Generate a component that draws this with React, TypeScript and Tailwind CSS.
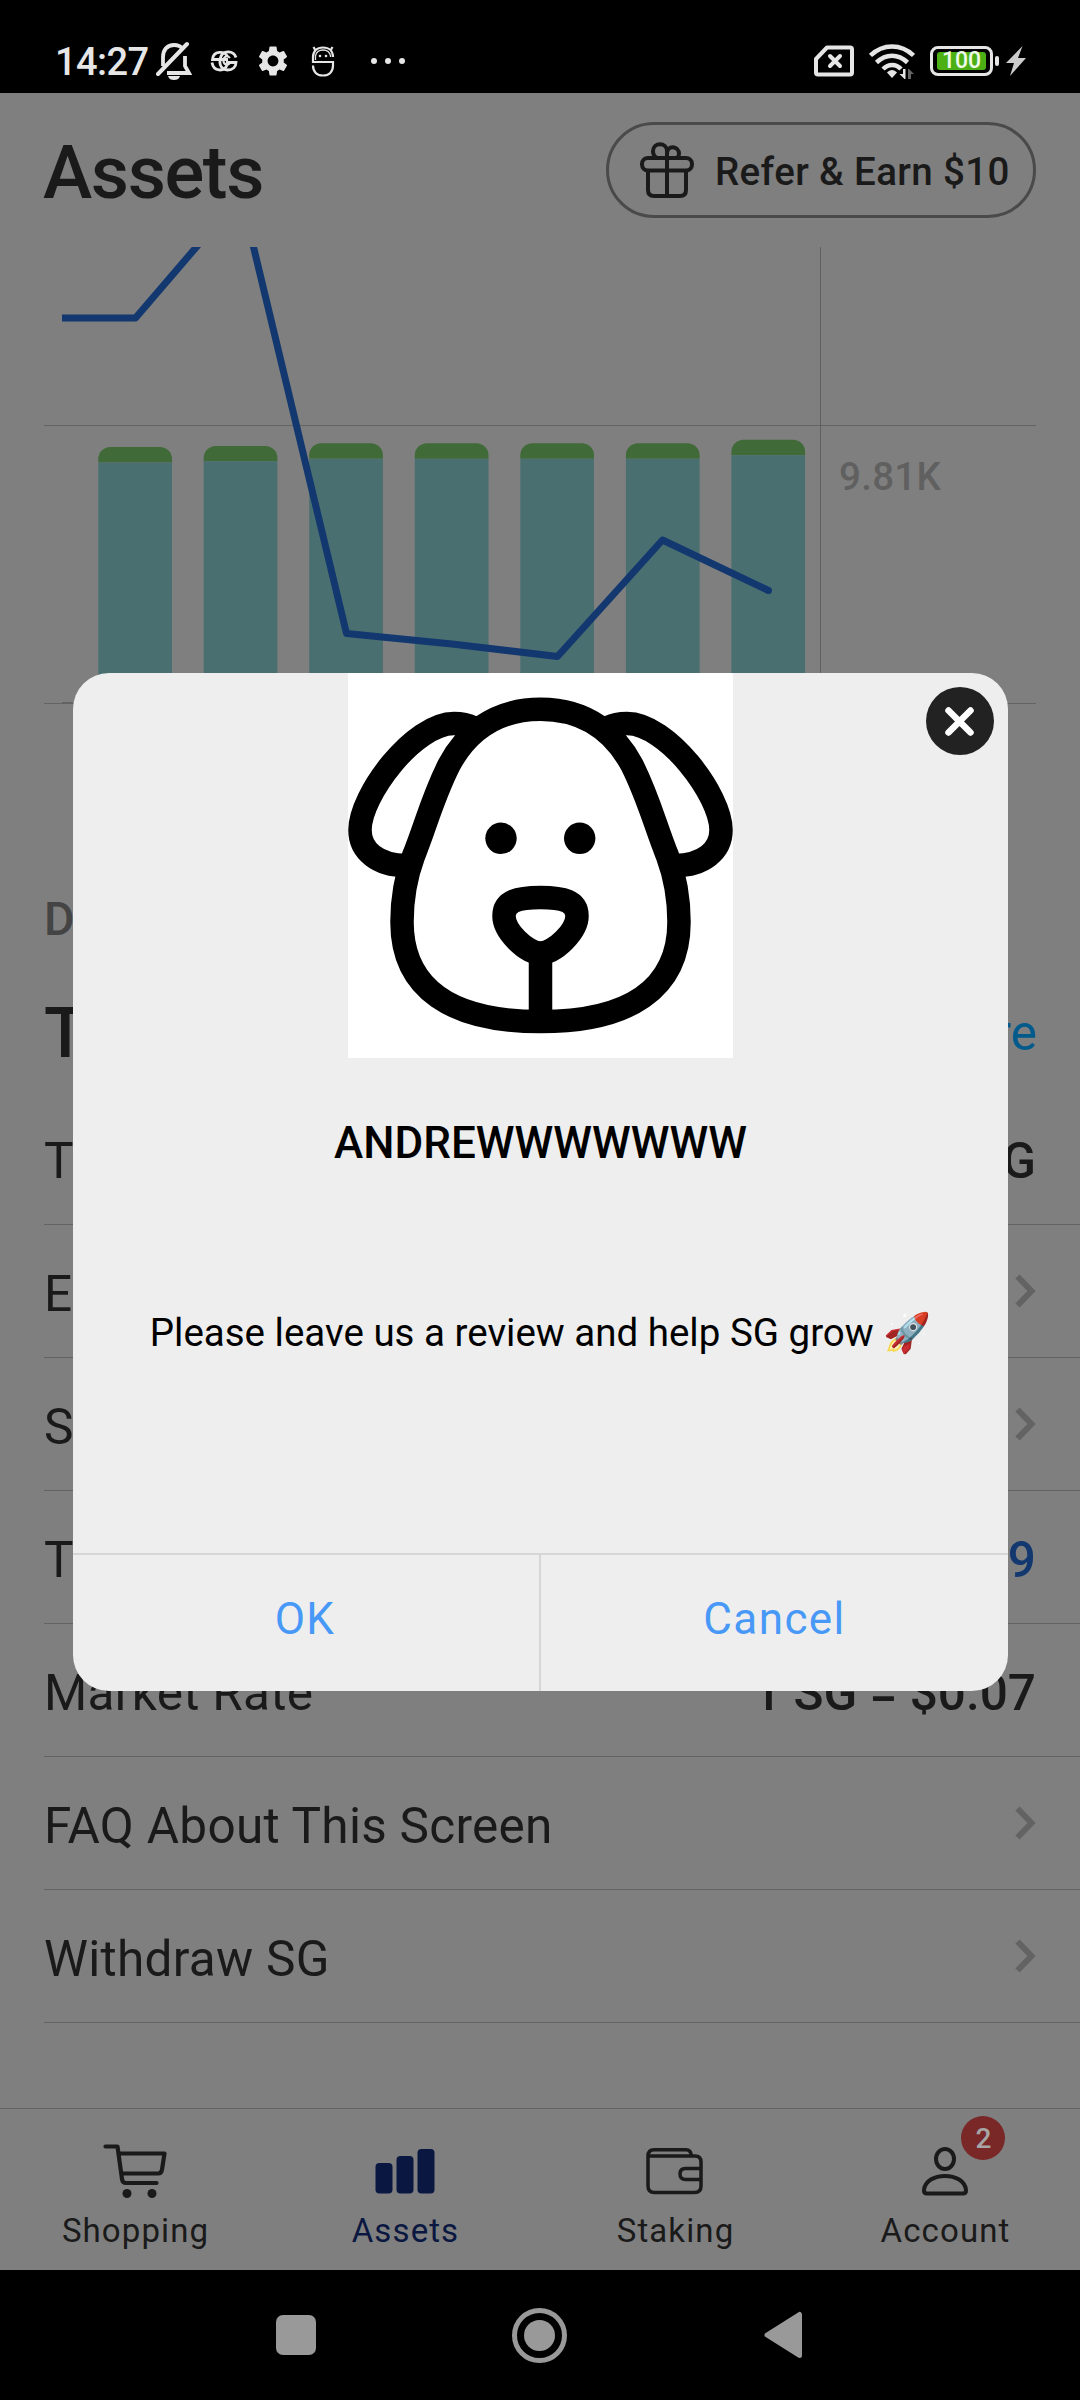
import React from 'react';

const bars = [
  { x: 98.3, top: 200, split: 215.6 },
  { x: 203.7, top: 199, split: 214.2 },
  { x: 309.2, top: 196.3, split: 211.8 },
  { x: 414.8, top: 196.3, split: 211.8 },
  { x: 520.3, top: 196.3, split: 211.8 },
  { x: 625.9, top: 196.3, split: 211.8 },
  { x: 731.4, top: 192.8, split: 208.2 },
];

function Chart() {
  return (
    <svg className="block h-[457px] w-full shrink-0" viewBox="0 0 1080 457">
      <rect x="44" y="178" width="992" height="1" fill="#636363" />
      <rect x="44" y="456" width="992" height="1" fill="#636363" />
      <rect x="62" y="455" width="758" height="1" fill="#636363" />
      <rect x="820" y="0" width="1" height="456" fill="#5f5f5f" />
      {bars.map((b) => (
        <g key={b.x}>
          <path
            d={`M${b.x} ${b.split}V${b.top + 12}a12 12 0 0 1 12 -12h49.7a12 12 0 0 1 12 12V${b.split}z`}
            fill="#406b39"
          />
          <rect x={b.x} y={b.split} width="73.7" height={455 - b.split} fill="#4a6f71" />
        </g>
      ))}
      <polyline
        points="62,71 135.5,71 241,-52 346.5,386.5 452,397 557.5,409.5 662.5,293 768.5,343.5"
        fill="none"
        stroke="#12386f"
        strokeWidth="7"
        strokeLinejoin="round"
      />
      <circle cx="768.5" cy="343.5" r="3.5" fill="#12386f" />
      <text x="839" y="243" fill="#606060" fontSize="38.5" fontWeight="500" letterSpacing="0.3">
        9.81K
      </text>
    </svg>
  );
}

function StatusBar() {
  return (
    <div className="flex h-[93px] shrink-0 items-center bg-black pl-[55px] pr-[54px] pt-[28px] text-[#e6e6e6]">
      <span className="w-[96px] whitespace-nowrap pt-[2px] text-[38px] font-medium leading-[44px] tracking-[-0.6px]">14:27</span>
      <svg className="ml-[5px] h-[40px] w-[36px]" viewBox="0 0 36 40" fill="none" stroke="#e6e6e6">
        <path d="M7 25V16C7 9 11 4 18 4c4 0 7 1.500 9 4M29 15v10l4 7H11" strokeWidth="3.800" />
        <path d="M2 33L31 3" strokeWidth="4" strokeLinecap="round" />
        <path d="M12 35h12c-1 3-3 4-6 4s-5-1-6-4z" fill="#e6e6e6" stroke="none" />
      </svg>
      <svg className="ml-[18px] h-[22px] w-[28px]" viewBox="0 0 28 22" fill="none" stroke="#e6e6e6" strokeWidth="2.800">
        <path d="M17.500 6.500C15 .5 3 .5 2.500 9.500H18M2 12.500C3.500 22 14.500 22 17 15" />
        <path d="M26 7.500C23.500 0 12.500 0 10.500 8C8.500 15 12 20 17.500 20C23 20 26 16.500 26 12.500H16" />
        <path d="M20 8c-2-2.500-6-2-6.500 2c-.5 5 4.500 6 6.500 3" strokeWidth="2" />
      </svg>
      <svg className="ml-[17px] h-[36px] w-[36px]" viewBox="0 0 24 24" fill="#e6e6e6">
        <path d="M19.140 12.940c.04-.3.060-.61.060-.94 0-.32-.02-.64-.07-.94l2.030-1.580c.18-.14.230-.41.120-.61l-1.920-3.320c-.12-.22-.37-.29-.59-.22l-2.390.96c-.5-.38-1.030-.7-1.620-.94l-.36-2.540c-.04-.24-.24-.41-.48-.41h-3.840c-.24 0-.43.17-.47.41l-.36 2.540c-.59.24-1.130.57-1.620.94l-2.390-.96c-.22-.08-.47 0-.59.22L2.740 8.870c-.12.21-.08.47.12.61l2.030 1.580c-.05.3-.09.63-.09.94s.02.640.07.940l-2.030 1.580c-.18.14-.23.41-.12.61l1.920 3.320c.12.220.37.290.59.220l2.390-.96c.5.380 1.030.700 1.620.940l.36 2.540c.05.240.24.410.48.410h3.840c.24 0 .44-.17.470-.41l.36-2.540c.59-.24 1.130-.56 1.620-.94l2.390.96c.22.080.47 0 .59-.22l1.920-3.320c.12-.22.070-.47-.12-.61l-2.010-1.580zM12 15.600c-1.980 0-3.600-1.620-3.600-3.600s1.620-3.600 3.600-3.600 3.600 1.620 3.600 3.600-1.620 3.600-3.600 3.600z" />
      </svg>
      <svg className="ml-[20px] h-[32px] w-[24px]" viewBox="0 0 24 32" fill="none" stroke="#e6e6e6" strokeWidth="2.200">
        <path d="M22 12C22 6 18 2.500 12 2.500S2 6 2 12V17H22V20.500C22 27 18 30.500 12 30.500S2 27 2 20.500M4.500 5.500L2.500 2M19.500 5.500l2-3.500" />
        <path d="M4.500 15V11C6 3 18 3 19.500 11V12" strokeWidth="1.300" />
        <circle cx="9" cy="11" r="1.300" fill="#e6e6e6" stroke="none" />
        <circle cx="15" cy="11" r="1.300" fill="#e6e6e6" stroke="none" />
      </svg>
      <div className="ml-[36px] flex gap-[8px]">
        <i className="size-[6px] rounded-full bg-[#e6e6e6]" />
        <i className="size-[6px] rounded-full bg-[#e6e6e6]" />
        <i className="size-[6px] rounded-full bg-[#e6e6e6]" />
      </div>
      <svg className="ml-auto h-[32px] w-[40px]" viewBox="0 0 40 32" fill="none" stroke="#e6e6e6" strokeWidth="4">
        <path d="M13 2.500h23q2 0 2 2v23q0 2-2 2H4q-2 0-2-2V14z" strokeLinejoin="round" />
        <path d="M16 11l10 10M26 11L16 21" strokeLinecap="round" />
      </svg>
      <svg className="ml-[15px] h-[36px] w-[46px]" viewBox="0 0 46 36" fill="none" stroke="#e6e6e6" strokeWidth="4.500">
        <path d="M1.500 12.500C14 .5 32 .5 44.500 12.500M7.500 19.500C17 10.500 29 10.500 38.500 19.500M14 26C19.500 20.500 27 20.500 32 26" />
        <path d="M18 29.500c3-3.500 7-3.500 10 0L23 35z" fill="#e6e6e6" stroke="none" />
        <path d="M36.500 26v10h-1l-5-5h3.500v-5z" fill="#e6e6e6" stroke="none" />
        <path d="M39 36V26h1l5 5h-3v5z" fill="#666" stroke="none" />
      </svg>
      <div className="ml-[15px] flex h-[30px] w-[63px] items-center justify-center rounded-[8px] border-[3px] border-[#e6e6e6]">
        <div className="flex h-[18px] w-[49px] items-center justify-center rounded-[3px] bg-[#4caf14] pt-px text-[23px] font-medium leading-[18px] text-[#eefbe8]">
          100
        </div>
      </div>
      <i className="ml-[2px] h-[10px] w-[4px] rounded-[2px] bg-[#e6e6e6]" />
      <svg className="ml-[7px] h-[30px] w-[20px]" viewBox="0 0 20 30" fill="#ccc">
        <path d="M16.500 0L0 17h8L4 30 20 12h-8z" />
      </svg>
    </div>
  );
}

function Header() {
  return (
    <div className="flex h-[154px] shrink-0 items-start justify-between pl-[43px] pr-[44px] pt-[29px]">
      <h1 className="mt-[3px] text-[74.250px] font-medium leading-[96px] tracking-[-1.400px]">Assets</h1>
      <div className="flex h-[96px] w-[430px] items-center rounded-full border-[3px] border-[#4a4a4a] pl-[31px]">
        <svg className="h-[56px] w-[54px]" viewBox="0 0 54 56" fill="none" stroke="#1a1a1a" strokeWidth="4">
          <rect x="2" y="16" width="50" height="12.500" rx="6" />
          <path d="M8 28.500V48q0 6 6 6h26q6 0 6-6V28.500M27 54V9" />
          <path d="M27 16V9c0-9-14-9-14 0q0 5 4 7M27 16v-4c0-10 12-8 12 0q0 2-2 4" />
        </svg>
        <span className="ml-[21px] whitespace-nowrap pt-[3px] text-[38.500px] font-medium leading-[44px] tracking-[0.380px]">
          Refer &amp; Earn $10
        </span>
      </div>
    </div>
  );
}

function Row({ label, value, blue, chevron }: { label: string; value?: string; blue?: boolean; chevron?: boolean }) {
  return (
    <div className="ml-[44px] flex h-[133px] shrink-0 items-center justify-between border-b border-[#636363] pr-[44px] text-[49.500px] leading-[58px]">
      <span className="pt-[5px] tracking-[0.280px]">{label}</span>
      {value && <span className={blue ? 'pt-[5px] font-medium text-[#12386f]' : 'pt-[5px] font-medium'}>{value}</span>}
      {chevron && (
        <svg className="h-[34px] w-[21px]" viewBox="0 0 21 34" fill="none" stroke="#636363" strokeWidth="6">
          <path d="M2.500 2.500L16.500 17 2.500 31.500" />
        </svg>
      )}
    </div>
  );
}

function Tab({ label, active, children }: { label: string; active?: boolean; children: React.ReactNode }) {
  return (
    <div className={active ? 'flex w-1/4 flex-col items-center text-[#0a1740]' : 'flex w-1/4 flex-col items-center'}>
      <div className="relative mt-[30px] flex h-[64px] w-[64px] justify-center">{children}</div>
      <span className="mt-[8px] pl-px text-[33px] leading-[40px] tracking-[1.100px]">{label}</span>
    </div>
  );
}

function TabBar() {
  return (
    <div className="flex h-[162px] shrink-0 border-t border-[#636363]">
      <Tab label="Shopping">
        <svg className="h-[64px] w-[64px]" viewBox="0 0 64 64" fill="none" stroke="#1a1a1a" strokeWidth="4.200" strokeLinecap="round" strokeLinejoin="round">
          <path d="M2.500 7.500h12l4.500 32.500q.5 4 4 4H53.500M15.500 14.500h46l-2.500 16q-.5 4-4 4H18.500" />
          <circle cx="24" cy="54.500" r="4.500" fill="#1a1a1a" stroke="none" />
          <circle cx="49" cy="54.500" r="4.500" fill="#1a1a1a" stroke="none" />
        </svg>
      </Tab>
      <Tab label="Assets" active>
        <svg className="h-[64px] w-[64px]" viewBox="0 0 64 64" fill="#0a1740">
          <rect x="2.500" y="24" width="17" height="30.500" rx="4" />
          <rect x="23.500" y="17" width="17" height="37.500" rx="4" />
          <rect x="44.500" y="10" width="17" height="44.500" rx="4" />
        </svg>
      </Tab>
      <Tab label="Staking">
        <svg className="h-[64px] w-[64px]" viewBox="0 0 64 64" fill="none" stroke="#1a1a1a" strokeWidth="3.500">
          <path d="M5 17V47q0 6.500 6.500 6.500h40q6.500 0 6.500-6.500V23q0-6-6-6H5q0-6.300 6-6.300h32q5 0 5.500 6.300" />
          <path d="M58 29.500H42.500q-5.500 0-5.500 5.500t5.500 5.500H58" />
        </svg>
      </Tab>
      <Tab label="Account">
        <svg className="h-[64px] w-[64px]" viewBox="0 0 64 64" fill="none" stroke="#1a1a1a" strokeWidth="4">
          <ellipse cx="32" cy="20" rx="9" ry="10" />
          <path d="M11 51.500C12 32 52 32 53 51.500q0 3-3 3H14q-3 0-3-3z" />
        </svg>
        <span className="absolute left-[48px] top-[-23px] flex size-[44px] items-center justify-center rounded-full bg-[#7a2727] pl-px pt-px text-[28px] font-medium text-[#a6a6a6]">
          2
        </span>
      </Tab>
    </div>
  );
}

function SystemNav() {
  return (
    <div className="flex h-[130px] shrink-0 items-center bg-black pl-[276px]">
      <i className="size-[40px] rounded-[7px] bg-[#999]" />
      <div className="ml-[196px] flex size-[55px] items-center justify-center rounded-full border-[5px] border-[#999]">
        <i className="size-[31px] rounded-full bg-[#999]" />
      </div>
      <svg className="ml-[197px] h-[48px] w-[38px]" viewBox="0 0 38 48" fill="#999" stroke="#999" strokeWidth="5" strokeLinejoin="round">
        <path d="M3 24L35.500 3.500v41z" />
      </svg>
    </div>
  );
}

function Dog() {
  return (
    <svg className="block h-[385px] w-[385px] bg-white" viewBox="0 0 385 385" fill="none" stroke="#000" strokeWidth="23.500">
      <path d="M192.500 36.300C143 36.300 116 64 101 92C84 126 78 152 65.500 183C57 206 54 226 54 249C54 316 104 348.600 192.500 348.600S331 316 331 249C331 226 328 206 319.500 183C307 152 301 126 284 92C269 64 242 36.300 192.500 36.300z" />
      <path d="M124 54C118 51 112 50.500 106 50.500C66 50.500 12 122 12 157C12 178 30 192.500 58 192.500" />
      <path d="M261 54C267 51 273 50.500 279 50.500C319 50.500 373 122 373 157C373 178 355 192.500 327 192.500" />
      <path d="M192.500 224.500C170 224.500 156 228 156 243C156 258 178 280 192.500 280S229 258 229 243C229 228 215 224.500 192.500 224.500z" />
      <path d="M192.500 280V348" />
      <circle cx="153" cy="165.300" r="15.700" fill="#000" stroke="none" />
      <circle cx="231.700" cy="165.300" r="15.700" fill="#000" stroke="none" />
    </svg>
  );
}

function Modal() {
  return (
    <div className="absolute left-[73px] top-[673px] flex h-[1018px] w-[935px] flex-col items-center overflow-hidden rounded-[36px] bg-[#eee] text-black">
      <Dog />
      <button className="absolute right-[14px] top-[14px] flex size-[68px] items-center justify-center rounded-full bg-[#222] pr-px pt-px">
        <svg className="h-[31px] w-[31px]" viewBox="0 0 31 31" stroke="#fff" strokeWidth="6.500" strokeLinecap="round">
          <path d="M4.500 4.500l22 22M26.500 4.500l-22 22" />
        </svg>
      </button>
      <h2 className="mt-[59px] text-[44px] font-medium leading-[52px]">ANDREWWWWWWW</h2>
      <p className="mt-[141px] whitespace-nowrap text-[38.500px] leading-[46px]">Please leave us a review and help SG grow 🚀</p>
      <div className="mt-auto flex h-[138px] w-full border-t-2 border-[#d6d6d6] text-[44px] leading-[52px] tracking-[1.400px] text-[#4899f7]">
        <button className="w-[468px] border-r-2 border-[#d6d6d6] pb-[8px] pr-[2px]">OK</button>
        <button className="w-[467px] pb-[8px]">Cancel</button>
      </div>
    </div>
  );
}

export default function App() {
  return (
    <div className="relative flex h-[2400px] w-[1080px] flex-col overflow-hidden bg-[#7f7f7f] font-['Roboto',sans-serif] text-[#1a1a1a]">
      <StatusBar />
      <Header />
      <Chart />
      <div className="flex h-[388px] shrink-0 flex-col px-[44px] pt-[187px]">
        <span className="text-[46.750px] font-medium leading-[56px] text-[#444]">D</span>
        <div className="mt-[44px] flex items-center justify-between leading-[84px]">
          <h2 className="text-[70px] font-medium">T</h2>
          <span className="-mr-px text-[49.500px] text-[#005a8c]">More</span>
        </div>
      </div>
      <Row label="T" value="SG" />
      <Row label="E" chevron />
      <Row label="S" chevron />
      <Row label="T" value="9" blue />
      <Row label="Market Rate" value="1 SG = $0.07" />
      <Row label="FAQ About This Screen" chevron />
      <Row label="Withdraw SG" chevron />
      <div className="flex-1" />
      <TabBar />
      <SystemNav />
      <Modal />
    </div>
  );
}
